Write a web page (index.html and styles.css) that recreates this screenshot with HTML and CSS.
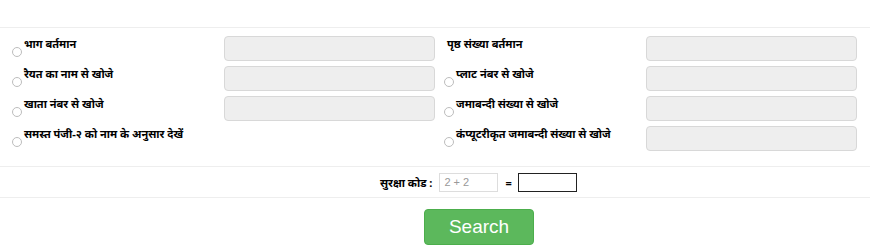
FILE: index.html
```html
<!DOCTYPE html>
<html lang="hi">
<head>
    <meta charset="UTF-8">
    <title>खोजें</title>
    <link rel="stylesheet" href="styles.css">
</head>
<body>
<div class="page">
    <div class="search-grid">
        <label class="opt"><input type="radio" name="mode"><span>भाग बर्तमान</span></label>
        <div class="field"><input type="text" class="box" disabled></div>
        <label class="opt no-radio"><span>पृष्ठ संख्या बर्तमान</span></label>
        <div class="field"><input type="text" class="box" disabled></div>

        <label class="opt"><input type="radio" name="mode"><span>रैयत का नाम से खोजे</span></label>
        <div class="field"><input type="text" class="box" disabled></div>
        <label class="opt"><input type="radio" name="mode"><span>प्लाट नंबर से खोजे</span></label>
        <div class="field"><input type="text" class="box" disabled></div>

        <label class="opt"><input type="radio" name="mode"><span>खाता नंबर से खोजे</span></label>
        <div class="field"><input type="text" class="box" disabled></div>
        <label class="opt"><input type="radio" name="mode"><span>जमाबन्दी संख्या से खोजे</span></label>
        <div class="field"><input type="text" class="box" disabled></div>

        <label class="opt"><input type="radio" name="mode"><span>समस्त पंजी-२ को नाम के अनुसार देखें</span></label>
        <div class="field"></div>
        <label class="opt"><input type="radio" name="mode"><span>कंप्यूटरीकृत जमाबन्दी संख्या से खोजे</span></label>
        <div class="field"><input type="text" class="box" disabled></div>
    </div>

    <div class="captcha-row">
        <span class="captcha-label">सुरक्षा कोड :</span>
        <input type="text" class="captcha-code" value="2 + 2" readonly>
        <span class="equals">=</span>
        <input type="text" class="captcha-answer">
    </div>

    <div class="actions">
        <button class="btn-search">Search</button>
    </div>
</div>
</body>
</html>
```

FILE: styles.css
```css
body, html {
    margin: 0;
    background: #fff;
    font-family: "Noto Sans", "Liberation Sans", Arial, sans-serif;
    color: #000;
}
.page {
    width: 870px;
    padding-top: 27px;
}
.search-grid {
    display: grid;
    grid-template-columns: 224px 211px 211px 211px;
    grid-auto-rows: 25px;
    row-gap: 5px;
    border-top: 1px solid #eee;
    padding-top: 8px;
    padding-bottom: 15px;
}
.opt {
    display: flex;
    align-items: flex-start;
    padding-left: 12px;
    font-size: 11px;
    font-weight: bold;
}
.opt:nth-child(4n+3) {
    padding-left: 9px;
}
.opt.no-radio {
    padding-left: 12px;
}
.opt input {
    appearance: none;
    width: 10px;
    height: 10px;
    margin: 11px 2px 0 0;
    border: 1px solid #bdbdbd;
    border-radius: 50%;
    background: #fff;
    flex-shrink: 0;
}
.opt span {
    margin-top: 1px;
    line-height: 14px;
}
.box {
    box-sizing: border-box;
    width: 211px;
    height: 25px;
    margin: 0;
    border: 1px solid #d8d8d8;
    border-radius: 4px;
    background: #eee;
}
.captcha-row {
    display: flex;
    align-items: center;
    height: 30px;
    padding-left: 380px;
    border-top: 1px solid #eee;
    border-bottom: 1px solid #eee;
    font-size: 11px;
}
.captcha-label {
    font-weight: bold;
    margin-right: 7px;
}
.captcha-code {
    box-sizing: border-box;
    width: 59px;
    height: 19px;
    border: 1px solid #ddd;
    padding: 0 4px;
    font: 11px "Liberation Sans", Arial, sans-serif;
    color: #999;
    background: #fff;
}
.equals {
    margin: 0 6px 0 7px;
    font-weight: bold;
}
.captcha-answer {
    box-sizing: border-box;
    width: 59px;
    height: 19px;
    border: 1px solid #222;
    margin: 0;
}
.actions {
    padding: 11px 0 0 424px;
}
.btn-search {
    width: 110px;
    height: 36px;
    border: 1px solid #4cae4c;
    border-radius: 4px;
    background: #5cb85c;
    color: #fff;
    font: 19px "Liberation Sans", Arial, sans-serif;
}
```
